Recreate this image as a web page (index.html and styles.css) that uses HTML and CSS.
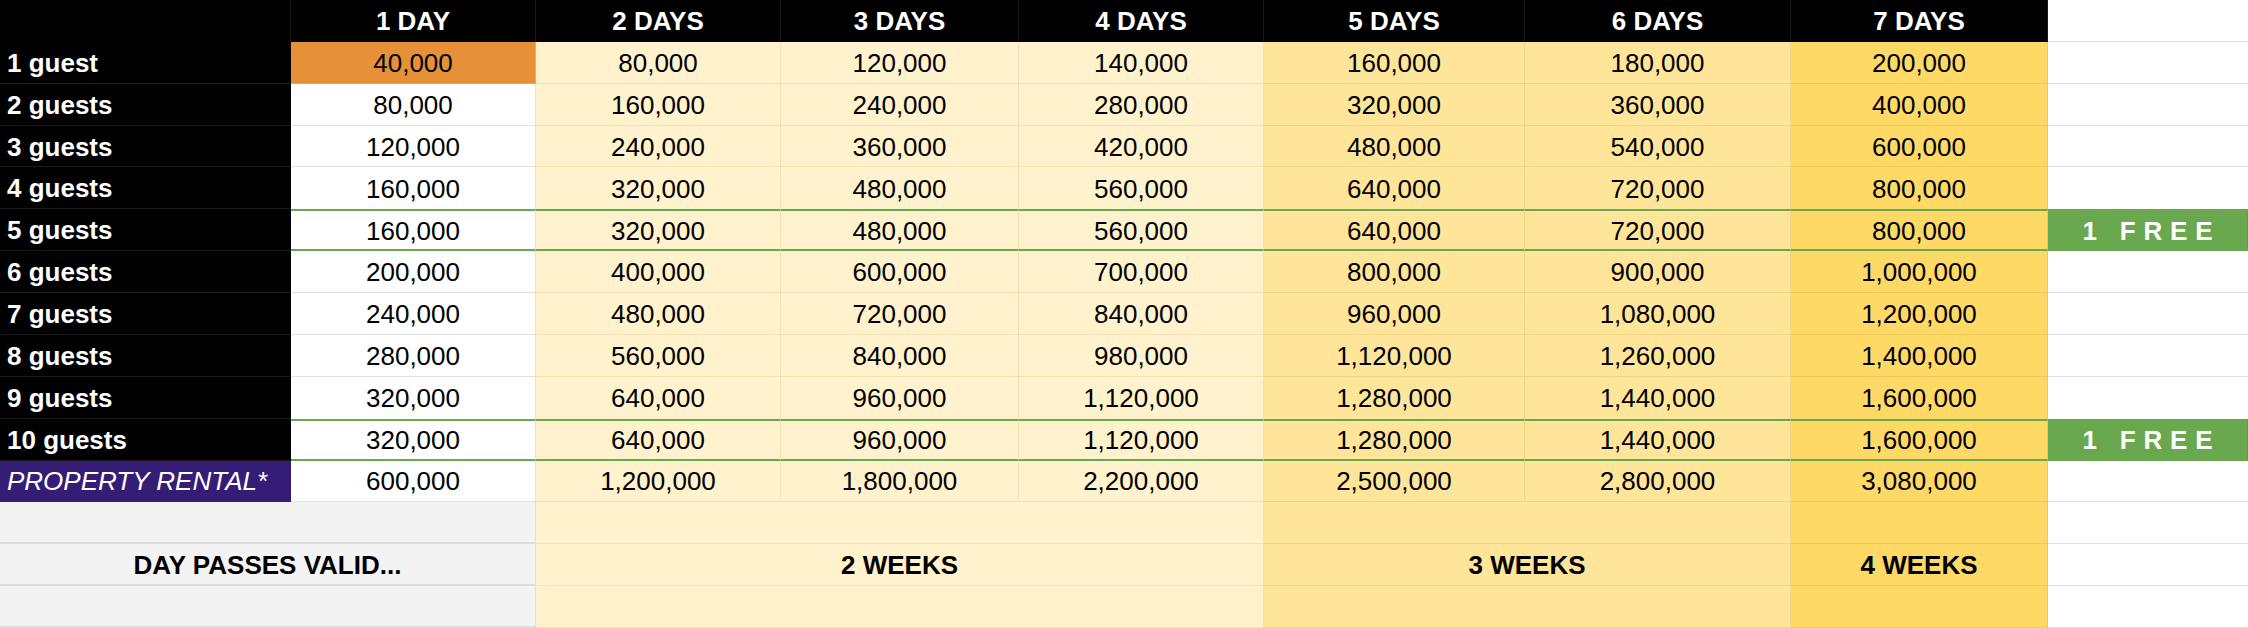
FILE: index.html
```html
<!DOCTYPE html>
<html>
<head>
<meta charset="utf-8">
<link rel="stylesheet" href="styles.css">
</head>
<body>
<div class="sheet">
  <div class="row">
    <div class="c h"></div><div class="c h">1 DAY</div><div class="c h">2 DAYS</div><div class="c h">3 DAYS</div><div class="c h">4 DAYS</div><div class="c h">5 DAYS</div><div class="c h">6 DAYS</div><div class="c h">7 DAYS</div><div class="c x"></div>
  </div>
  <div class="row">
    <div class="c lbl">1 guest</div><div class="c o">40,000</div><div class="c y3">80,000</div><div class="c y3">120,000</div><div class="c y3">140,000</div><div class="c y2">160,000</div><div class="c y2">180,000</div><div class="c y1">200,000</div><div class="c x"></div>
  </div>
  <div class="row">
    <div class="c lbl">2 guests</div><div class="c w">80,000</div><div class="c y3">160,000</div><div class="c y3">240,000</div><div class="c y3">280,000</div><div class="c y2">320,000</div><div class="c y2">360,000</div><div class="c y1">400,000</div><div class="c x"></div>
  </div>
  <div class="row">
    <div class="c lbl">3 guests</div><div class="c w">120,000</div><div class="c y3">240,000</div><div class="c y3">360,000</div><div class="c y3">420,000</div><div class="c y2">480,000</div><div class="c y2">540,000</div><div class="c y1">600,000</div><div class="c x"></div>
  </div>
  <div class="row pre">
    <div class="c lbl">4 guests</div><div class="c w">160,000</div><div class="c y3">320,000</div><div class="c y3">480,000</div><div class="c y3">560,000</div><div class="c y2">640,000</div><div class="c y2">720,000</div><div class="c y1">800,000</div><div class="c x"></div>
  </div>
  <div class="row g">
    <div class="c lbl">5 guests</div><div class="c w">160,000</div><div class="c y3">320,000</div><div class="c y3">480,000</div><div class="c y3">560,000</div><div class="c y2">640,000</div><div class="c y2">720,000</div><div class="c y1">800,000</div><div class="c free">1 FREE</div>
  </div>
  <div class="row">
    <div class="c lbl">6 guests</div><div class="c w">200,000</div><div class="c y3">400,000</div><div class="c y3">600,000</div><div class="c y3">700,000</div><div class="c y2">800,000</div><div class="c y2">900,000</div><div class="c y1">1,000,000</div><div class="c x"></div>
  </div>
  <div class="row">
    <div class="c lbl">7 guests</div><div class="c w">240,000</div><div class="c y3">480,000</div><div class="c y3">720,000</div><div class="c y3">840,000</div><div class="c y2">960,000</div><div class="c y2">1,080,000</div><div class="c y1">1,200,000</div><div class="c x"></div>
  </div>
  <div class="row">
    <div class="c lbl">8 guests</div><div class="c w">280,000</div><div class="c y3">560,000</div><div class="c y3">840,000</div><div class="c y3">980,000</div><div class="c y2">1,120,000</div><div class="c y2">1,260,000</div><div class="c y1">1,400,000</div><div class="c x"></div>
  </div>
  <div class="row pre">
    <div class="c lbl">9 guests</div><div class="c w">320,000</div><div class="c y3">640,000</div><div class="c y3">960,000</div><div class="c y3">1,120,000</div><div class="c y2">1,280,000</div><div class="c y2">1,440,000</div><div class="c y1">1,600,000</div><div class="c x"></div>
  </div>
  <div class="row g">
    <div class="c lbl">10 guests</div><div class="c w">320,000</div><div class="c y3">640,000</div><div class="c y3">960,000</div><div class="c y3">1,120,000</div><div class="c y2">1,280,000</div><div class="c y2">1,440,000</div><div class="c y1">1,600,000</div><div class="c free">1 FREE</div>
  </div>
  <div class="row">
    <div class="c lbl pr">PROPERTY RENTAL*</div><div class="c w">600,000</div><div class="c y3">1,200,000</div><div class="c y3">1,800,000</div><div class="c y3">2,200,000</div><div class="c y2">2,500,000</div><div class="c y2">2,800,000</div><div class="c y1">3,080,000</div><div class="c x"></div>
  </div>
  <div class="row">
    <div class="c gr"></div><div class="c y3 s3"></div><div class="c y2 s2"></div><div class="c y1"></div><div class="c x"></div>
  </div>
  <div class="row">
    <div class="c gr b">DAY PASSES VALID...</div><div class="c y3 s3 b">2 WEEKS</div><div class="c y2 s2 b">3 WEEKS</div><div class="c y1 b">4 WEEKS</div><div class="c x"></div>
  </div>
  <div class="row">
    <div class="c gr"></div><div class="c y3 s3"></div><div class="c y2 s2"></div><div class="c y1"></div><div class="c x"></div>
  </div>
</div>
</body>
</html>
```

FILE: styles.css
```css
html, body {
  margin: 0;
  padding: 0;
  background: #fff;
  overflow: hidden;
}

.sheet {
  display: grid;
  grid-template-columns: 291px 245px 245px 238px 245px 261px 266px 257px 200px;
  grid-template-rows: repeat(15, 1fr);
  width: 2248px;
  height: 628px;
  font-family: "Liberation Sans", Arial, sans-serif;
  font-size: 26px;
  color: #000;
}

.row {
  display: contents;
}

.c {
  display: flex;
  align-items: center;
  justify-content: center;
  box-sizing: border-box;
  white-space: nowrap;
  overflow: hidden;
  padding-top: 2px;
  border-right: 1px solid rgba(0, 0, 0, 0.07);
  border-bottom: 1px solid rgba(0, 0, 0, 0.1);
}

.h {
  background: #000;
  color: #fff;
  font-weight: bold;
  border-right-color: #1c1c1c;
  border-bottom-color: #000;
}

.lbl {
  background: #000;
  color: #fff;
  font-weight: bold;
  justify-content: flex-start;
  padding-left: 7px;
  border-right: 0;
  border-bottom-color: #1a1a1a;
}

.pr {
  background: #351c75;
  font-style: italic;
  font-weight: normal;
  border-bottom-color: #351c75;
}

.o {
  background: #e69138;
  border-bottom-color: #e0a566;
  border-right-color: #e8ad6e;
}

.w {
  background: #fff;
  border-bottom-color: #e2e2e2;
  border-right-color: #efe2bd;
}

.y3 {
  background: #fff2cc;
  border-color: #f1e1b3;
}

.y2 {
  background: #ffe599;
  border-color: #f0d589;
}

.y1 {
  background: #ffd966;
  border-color: #efc95a;
}

.y3, .y2, .y1 {
  border-top: 0;
  border-left: 0;
}

.x {
  background: #fff;
  border-right: 0;
  border-bottom-color: #e2e2e2;
}

.free {
  background: #6aa84f;
  color: #fff;
  font-weight: bold;
  letter-spacing: 0.3em;
  padding-left: 0.3em;
}

.row.g > .c:not(.lbl) {
  border-top: 2px solid #6aa84f;
  border-bottom: 2px solid #6aa84f;
}

.row.pre > .c:not(.lbl) {
  border-bottom-width: 0;
}

.gr {
  grid-column: span 2;
  background: #f3f3f3;
  border-right-color: #f1e1b3;
  border-bottom: 2px solid #dcdcdc;
}

.s3 {
  grid-column: span 3;
}

.s2 {
  grid-column: span 2;
}

.b {
  font-weight: bold;
}
```
